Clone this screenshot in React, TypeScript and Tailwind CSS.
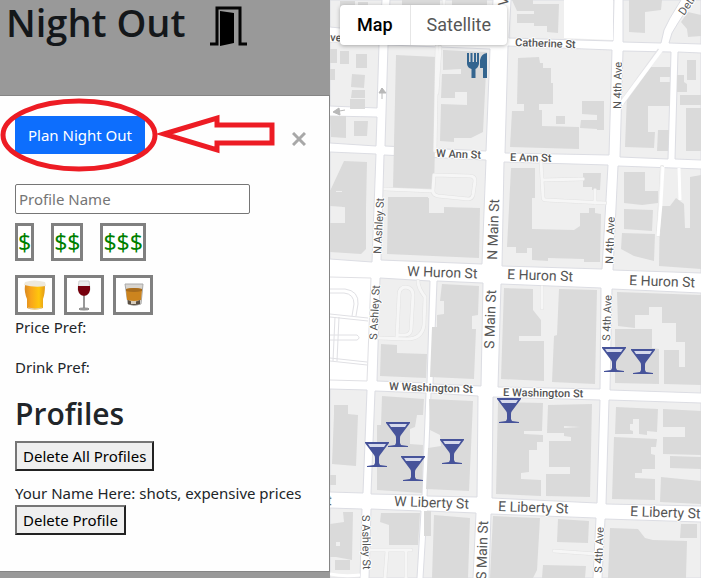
import { useState } from "react";
import type { ReactNode } from "react";

const blocks = [
  "330,0 382,0 380,32 330,27",
  "330,42 379,44 377,108 330,106",
  "330,116 377,117 376,146 330,143",
  "330,152 376,154 372,262 330,259",
  "390,0 493,0 491,36 388,33",
  "388,45 490,49 486,151 385,146",
  "384,155 486,160 482,264 381,260",
  "511,0 614,0 613,41 509,38",
  "623,0 681,0 670,18 664,30 661,43 623,42",
  "693,0 701,0 701,44 669,43 672,33 678,23",
  "508,46 612,50 609,155 505,153",
  "623,51 671,52 668,159 620,157",
  "678,52 701,53 701,160 675,159",
  "504,162 608,165 602,269 502,266",
  "618,166 701,169 701,273 613,270",
  "380,278 430,281 427,383 377,381",
  "437,281 483,283 481,386 433,384",
  "501,284 601,288 600,389 498,387",
  "612,289 701,293 701,393 610,390",
  "330,389 367,390 363,493 330,492",
  "375,391 426,393 422,495 371,494",
  "431,393 478,396 477,497 427,496",
  "493,397 600,400 597,503 492,498",
  "609,400 701,403 701,506 606,504",
  "330,508 362,509 360,578 330,578",
  "371,509 421,511 417,578 369,578",
  "427,511 476,513 473,578 423,578",
  "491,514 596,518 593,578 489,578",
  "605,519 701,522 701,578 602,578",
];

const buildings = [
  "340,1 355,1 355,8 340,8",
  "358,2 368,2 368,8 358,8",
  "402,0 440,0 440,8 402,8",
  "452,0 487,0 487,8 452,8",
  "330,49 337,49 337,63 330,63",
  "340,51 349,51 349,64 340,64",
  "356,54 367,54 367,68 356,68",
  "330,69 335,69 335,80 330,80",
  "352,74 365,75 364,88 351,87",
  "352,90 365,90 365,98 351,98",
  "350,99 365,99 365,109 350,109",
  "330,116 346,116 346,138 331,137",
  "354,121 368,121 367,136 354,136",
  "344,161 367,162 366,208 342,207 342,191 330,191",
  "330,190 336,190 336,192 366,192 366,249 361,254 330,252 330,223 345,223 345,207 330,206",
  "396,55 437,57 434,189 393,188",
  "443,50 462,51 487,52 483,132 471,138 454,138 454,142 440,141 441,104 467,105 467,92 455,92 455,98 441,98 442,74 461,74 461,69 443,70",
  "388,197 429,198 429,213 444,213 444,207 480,208 479,258 387,254",
  "389,197 428,197 428,200 389,200",
  "512,0 533,0 533,4 559,4 558,33 547,32 547,26 534,26 534,23 517,23 517,14 534,14 534,11 517,11",
  "629,0 662,0 661,10 645,12 645,33 629,32",
  "681,22 688,12 701,15 701,36 688,37 687,29",
  "518,58 539,57 540,63 543,63 543,68 551,68 551,83 553,83 553,104 539,104 539,110 542,110 542,126 579,127 579,149 510,147 512,111 524,111 524,104 517,104",
  "582,101 604,101 604,130 597,130 597,129 580,128 581,120 597,120 597,115 582,114",
  "556,116 565,116 565,124 556,124",
  "649,67 670,67 670,77 660,77 660,82 670,82 670,106 648,106 648,132 655,132 654,148 625,147 627,94",
  "658,130 669,130 668,151 657,151",
  "687,60 696,60 696,80 687,80",
  "677,75 684,75 684,82 687,84 687,92 677,92",
  "680,95 701,95 701,105 680,105",
  "686,108 701,108 701,151 686,151",
  "511,168 535,168 535,198 532,198 532,229 574,230 580,226 580,213 589,213 589,208 595,208 595,213 601,214 600,262 584,262 584,259 548,258 548,261 532,260 532,248 527,248 527,253 516,253 516,247 507,247",
  "583,173 601,173 600,190 592,190 592,187 583,187",
  "624,172 645,172 645,191 658,191 658,203 642,205 624,203",
  "624,209 653,210 652,231 624,229",
  "622,233 655,234 654,261 634,256 621,249",
  "660,206 670,206 676,198 684,204 685,228 690,228 690,177 701,175 701,269 659,266",
  "442,284 479,286 478,315 472,316 472,329 476,329 474,379 430,377 432,327 437,327 437,315 444,314 444,301 440,301",
  "381,344 397,345 397,353 427,354 426,378 380,376",
  "504,288 533,289 533,310 541,320 541,336 519,336 519,341 544,341 544,381 501,379",
  "559,289 597,290 595,384 552,382 554,336 557,335",
  "617,292 701,295 701,385 664,384 664,350 679,350 679,367 685,367 685,342 676,342 676,323 662,323 662,307 649,307 649,315 635,315 635,328 618,326",
  "615,329 652,329 652,348 659,349 659,384 615,383",
  "334,405 348,405 348,414 358,415 356,466 332,464 334,414",
  "330,475 336,475 336,485 330,485",
  "382,396 424,399 423,415 417,415 415,427 410,429 410,444 423,445 422,493 377,490 377,425 381,425",
  "429,399 473,401 471,448 469,491 426,489 428,448 441,446 440,435 430,430",
  "498,402 543,403 542,431 524,431 524,434 543,435 543,442 537,442 537,450 529,450 529,472 521,473 521,479 541,480 541,496 496,494",
  "548,405 592,404 590,497 546,496 546,474 570,474 570,467 549,467 549,441 571,441 571,437 564,436 564,428 580,427 564,426 564,433 547,433",
  "616,407 658,409 657,432 647,431 647,435 639,434 639,419 633,419 633,424 630,424 630,430 633,431 633,434 615,434",
  "614,437 657,439 656,447 651,447 651,454 655,455 655,469 642,469 642,473 635,473 635,478 655,479 655,500 612,499 613,468",
  "663,409 701,411 701,455 663,454 663,437 685,437 685,427 663,427",
  "670,456 701,457 701,469 670,468",
  "661,477 701,481 701,504 660,502",
  "343,512 353,512 352,560 336,557 330,557 330,524 344,522",
  "335,560 350,560 350,570 335,570",
  "381,513 420,513 418,545 389,545 389,525 380,522",
  "424,511 431,511 431,536 424,536",
  "434,515 470,518 468,578 432,578",
  "493,516 540,518 537,570 533,578 490,578",
  "558,519 589,521 588,543 557,542",
  "543,565 586,566 585,578 542,578",
  "610,528 638,529 645,538 653,540 687,541 686,578 608,578",
  "681,524 697,524 697,538 680,538",
];

// Parking lanes and service alleys, drawn as a light line with a soft edge.
const alleys = [
  "M435 151 L437 45 M444 0 V6",
  "M440 47 L437 93",
  "M385 189 L433 191 L434 175 L470 176 Q475 176 475 181 L473 195 Q472 199 468 199 L438 196 Q433 195 433 191",
  "M541 162 L543 197 Q543 200 546 200 L605 203 M542 180 L583 179 M595 190 V203",
  "M662 167 L660 205 L658 235",
  "M418 281 Q418 288 425 297 L424 325 Q422 339 407 339 L378 338",
  "M397 337 L399 295 Q399 287 406 287 Q413 288 413 295 L411 330 Q410 335 405 335 H398",
  "M542 287 V308",
  "M370 550 H411 M387 551 L385 578 M406 551 V578",
  "M554 551 L596 554",
];

type Label = { text: string; x: number; y: number; turn: number; size: "street" | "avenue" | "main" };

const labels: Label[] = [
  { text: "ve", x: 330, y: 41, turn: 3, size: "street" },
  { text: "V", x: 508, y: 6, turn: -86, size: "main" },
  { text: "Catherine St", x: 515, y: 46, turn: 2, size: "street" },
  { text: "W Ann St", x: 436, y: 157, turn: 2, size: "street" },
  { text: "E Ann St", x: 510, y: 161, turn: 1, size: "street" },
  { text: "W Huron St", x: 407, y: 276, turn: 2, size: "main" },
  { text: "E Huron St", x: 507, y: 279, turn: 2, size: "main" },
  { text: "E Huron St", x: 629, y: 285, turn: 2, size: "main" },
  { text: "W Washington St", x: 389, y: 390, turn: 2, size: "street" },
  { text: "E Washington St", x: 503, y: 396, turn: 1, size: "street" },
  { text: "W Liberty St", x: 394, y: 506, turn: 2, size: "main" },
  { text: "E Liberty St", x: 498, y: 511, turn: 2, size: "main" },
  { text: "E Liberty St", x: 630, y: 516, turn: 2, size: "main" },
  { text: "t", x: 327, y: 505, turn: 2, size: "main" },
  { text: "N Ashley St", x: 381, y: 254, turn: -87, size: "avenue" },
  { text: "S Ashley St", x: 377, y: 340, turn: -87, size: "avenue" },
  { text: "S Ashley St", x: 362, y: 515, turn: 89, size: "avenue" },
  { text: "N Main St", x: 497, y: 260, turn: -88, size: "main" },
  { text: "S Main St", x: 494, y: 349, turn: -88, size: "main" },
  { text: "S Main St", x: 486, y: 580, turn: -88, size: "main" },
  { text: "N 4th Ave", x: 621, y: 109, turn: -89, size: "avenue" },
  { text: "N 4th Ave", x: 613, y: 264, turn: -88, size: "avenue" },
  { text: "S 4th Ave", x: 610, y: 341, turn: -88, size: "avenue" },
  { text: "S 4th Ave", x: 602, y: 573, turn: -88, size: "avenue" },
  { text: "Detroit St", x: 684, y: 16, turn: -55, size: "avenue" },
];

const labelStyle = {
  street: "text-[11px] font-medium",
  avenue: "text-[11px]",
  main: "text-[14px]",
};

const bars = [
  [614, 360],
  [643, 362],
  [509, 411],
  [398, 435],
  [377, 455],
  [413, 469],
  [452, 452],
];

function StreetMap() {
  return (
    <svg
      viewBox="330 0 371 578"
      preserveAspectRatio="xMinYMin slice"
      className="absolute inset-0 h-full w-full font-[Roboto,sans-serif]"
      role="img"
      aria-label="Street map"
    >
      <rect x="330" width="371" height="578" fill="#fff" />
      <g fill="#efefef" stroke="#dcdde3">
        {blocks.map((p) => (
          <polygon key={p} points={p} />
        ))}
      </g>
      <path d="M564 0H613V40L564 38Z" fill="#fff" />
      <g fill="#dadada">
        {buildings.map((p) => (
          <polygon key={p} points={p} />
        ))}
      </g>
      <g fill="none" strokeLinejoin="round" strokeLinecap="round">
        {alleys.map((d) => (
          <path key={d} d={d} stroke="#e2e2e2" strokeWidth="4" />
        ))}
        {alleys.map((d) => (
          <path key={d} d={d} stroke="#f6f6f6" strokeWidth="3" />
        ))}
      </g>
      <path d="M660 50L622 103" stroke="#e2e2e6" strokeWidth="5" />
      <path d="M661 50L621 104" stroke="#fff" strokeWidth="4" />
      <path d="M663 167L661 204 658 236M679 168L680 200" stroke="#fff" strokeWidth="3" fill="none" />
      <g fill="none" stroke="#e0e0e4">
        <path d="M330 277L371 278 367 381 330 380" />
        <path d="M330 289H345Q359 291 358 304L356 316M330 293H344Q354 294 354 304L352 316M330 314L368 318M330 317L368 321M335 317L333 361M339 317L337 361M330 335H357Q361 338 357 340H330M330 358L367 362M330 361L367 365" />
        <path d="M330 574Q344 577 360 575" stroke="#fff" strokeWidth="3" />
      </g>
      <rect x="336" y="542" width="4" height="4" fill="#efefef" />
      <path d="M382 99V88M379 93L382 88 386 93ZM345 110L334 112M339 108L333 112 340 115Z" fill="#b8b8b8" stroke="#b8b8b8" />
      <g fill="#555" stroke="#fff" strokeWidth="2" strokeLinejoin="round" paintOrder="stroke">
        {labels.map((l) => (
          <text
            key={`${l.text}-${l.x}-${l.y}`}
            x={l.x}
            y={l.y}
            transform={`rotate(${l.turn} ${l.x} ${l.y})`}
            className={labelStyle[l.size]}
          >
            {l.text}
          </text>
        ))}
      </g>
      <g fill="#34658f">
        <path d="M467 53h2v9h1.500v-9h2v9h1.500v-9h2v9h1v-9h2v11q-1 4-3.500 5v9h-4v-9q-4-1-4.500-5z" />
        <path d="M487 53v25h-4v-10h-3v-8q1-6 7-7z" />
      </g>
      {bars.map(([x, y]) => (
        <g key={x} transform={`translate(${x} ${y})`} fill="#46539a">
          <path d="M-12-13H12V-12L3 0Q2 1 2 3V8L3 10 10 11V12H-10V11L-3 10-2 8V3Q-2 1-3 0L-12-12Z" />
          <path d="M-9-11H9L7-8H-7Z" fill="#d5d9ec" />
        </g>
      ))}
    </svg>
  );
}

function DoorIcon() {
  return (
    <svg viewBox="0 0 38 40" className="h-10 w-[38px]" aria-hidden="true">
      <path d="M0 38H7V2H30V38H37" fill="none" stroke="#050505" strokeWidth="3" />
      <path d="M10 5L24 7V37L10 40Z" fill="#000" />
    </svg>
  );
}

function BeerIcon() {
  return (
    <svg viewBox="0 0 34 34" className="h-[34px] w-[34px]" aria-hidden="true">
      <defs>
        <linearGradient id="beer">
          <stop offset="0" stopColor="#d98a22" />
          <stop offset=".3" stopColor="#f9a51b" />
          <stop offset=".7" stopColor="#ffc60c" />
          <stop offset="1" stopColor="#e29a1c" />
        </linearGradient>
      </defs>
      <path d="M7 7H27Q27 16 25 21L25 30Q16 33 9 30V21Q6 14 7 7Z" fill="url(#beer)" />
      <path d="M7 4Q16 1 27 4L28 8Q17 10 6 7Z" fill="#eee9dc" />
      <path d="M10 30Q17 32 24 30" stroke="#dfceb0" fill="none" />
    </svg>
  );
}

function WineIcon() {
  return (
    <svg viewBox="0 0 34 34" className="h-[34px] w-[34px]" aria-hidden="true">
      <path d="M12 3H22L23 11Q22 17 17 18 12 17 11 11Z" fill="#ececec" stroke="#cfcfcf" />
      <path d="M11 8H23Q24 17 17 18 10 17 11 8Z" fill="#76000d" />
      <path d="M17 18V30" stroke="#999" strokeWidth="2" />
      <ellipse cx="17" cy="31" rx="5" ry="1" fill="#aaa" stroke="#888" />
    </svg>
  );
}

function ShotIcon() {
  return (
    <svg viewBox="0 0 34 34" className="h-[34px] w-[34px]" aria-hidden="true">
      <path d="M9 6H27L25 26Q18 29 12 26Z" fill="#d8d5d0" stroke="#aaa" />
      <path d="M10 11Q18 9 26 11L25 22Q18 24 11 22Z" fill="#cc841e" />
      <path d="M10 11Q18 9 26 11V13Q18 15 10 13Z" fill="#a86c1d" />
      <path d="M12 22Q18 25 24 22L24 26Q18 28 12 26Z" fill="#5b5042" />
      <path d="M15 23H20V26H15Z" fill="#d7cdbc" />
    </svg>
  );
}

function Choice({ label, onPick, children, className }: { label: string; onPick: () => void; children: ReactNode; className: string }) {
  return (
    <button type="button" aria-label={label} onClick={onPick} className={`border-[3px] border-[#808080] bg-white ${className}`}>
      {children}
    </button>
  );
}

function PlainButton({ children }: { children: ReactNode }) {
  return (
    <button
      type="button"
      className="block h-[30px] border-2 border-t-[#767676] border-r-[#222] border-b-[#222] border-l-[#767676] bg-[#efefef] px-1.5 leading-6 text-black"
    >
      {children}
    </button>
  );
}

export default function App() {
  const [price, setPrice] = useState("");
  const [drink, setDrink] = useState("");
  return (
    <main className="flex min-h-screen font-['Noto_Sans','Open_Sans',sans-serif] text-[15px] leading-6 text-[#212529]">
      <section className="w-[330px] shrink-0 bg-[#999]">
        <header className="flex h-[95px] items-start gap-6 px-1.5 text-[#14171a]">
          <h1 className="font-['Open_Sans',sans-serif] text-[38px] leading-[44px] font-semibold">Night Out</h1>
          <div className="pt-1.5">
            <DoorIcon />
          </div>
        </header>

        <div role="dialog" aria-label="Plan Night Out" className="relative border border-l-0 border-[#858585] bg-[#fefefe] px-[15px] pt-5 pb-9">
          <div className="flex h-[38px] items-center justify-between">
            <button type="button" className="h-[38px] bg-[#0d6efd] px-[13px] text-white">
              Plan Night Out
            </button>
            <button type="button" aria-label="Close" className="p-2 pt-4 text-[#a8a8a8]">
              <svg viewBox="0 0 14 14" className="h-3.5 w-3.5" aria-hidden="true">
                <path d="M1 1L13 13M13 1L1 13" stroke="currentColor" strokeWidth="3" />
              </svg>
            </button>
          </div>
          <svg viewBox="0 0 276 80" className="pointer-events-none absolute top-0 left-0 h-20 w-[276px]" fill="none" stroke="#ed1c24" strokeWidth="5" aria-hidden="true">
            <ellipse cx="79" cy="39" rx="76" ry="34" />
            <path d="M164 38L217 22V29H272V47H217V54Z" />
          </svg>

          <input
            type="text"
            aria-label="Profile Name"
            placeholder="Profile Name"
            className="mt-[30px] block h-[30px] w-[235px] rounded-[2px] border border-[#767676] bg-white px-[3px] placeholder:text-[#757575]"
          />

          <div className="mt-[9px] flex gap-[17px] text-[23px] leading-8 text-[#008000]">
            <Choice label="Cheap" onPick={() => setPrice("cheap")} className="h-[38px]">$</Choice>
            <Choice label="Moderate" onPick={() => setPrice("moderate")} className="h-[38px]">$$</Choice>
            <Choice label="Expensive" onPick={() => setPrice("expensive")} className="h-[38px]">$$$</Choice>
          </div>

          <div className="mt-3.5 flex gap-[9px]">
            <Choice label="Beer" onPick={() => setDrink("beer")} className="h-10 w-10"><BeerIcon /></Choice>
            <Choice label="Wine" onPick={() => setDrink("wine")} className="h-10 w-10"><WineIcon /></Choice>
            <Choice label="Shots" onPick={() => setDrink("shots")} className="h-10 w-10"><ShotIcon /></Choice>
          </div>

          <p>Price Pref: {price}</p>
          <p className="mt-4">Drink Pref: {drink}</p>

          <h2 className="mt-4 mb-2 font-['Open_Sans',sans-serif] text-[30px] leading-[38px] font-semibold">Profiles</h2>
          <PlainButton>Delete All Profiles</PlainButton>
          <p className="mt-2.5">Your Name Here: shots, expensive prices</p>
          <PlainButton>Delete Profile</PlainButton>
        </div>
      </section>

      <section className="relative min-w-0 flex-1 overflow-hidden bg-white">
        <StreetMap />
        <div className="absolute top-[5px] left-2.5 flex h-10 rounded-sm bg-white font-[Roboto,sans-serif] text-[18px] shadow-[0_1px_4px_rgba(0,0,0,0.3)]">
          <button type="button" className="px-[17px] font-medium text-black">Map</button>
          <button type="button" className="border-l border-[#e6e6e6] px-4 text-[#565656]">Satellite</button>
        </div>
      </section>
    </main>
  );
}
